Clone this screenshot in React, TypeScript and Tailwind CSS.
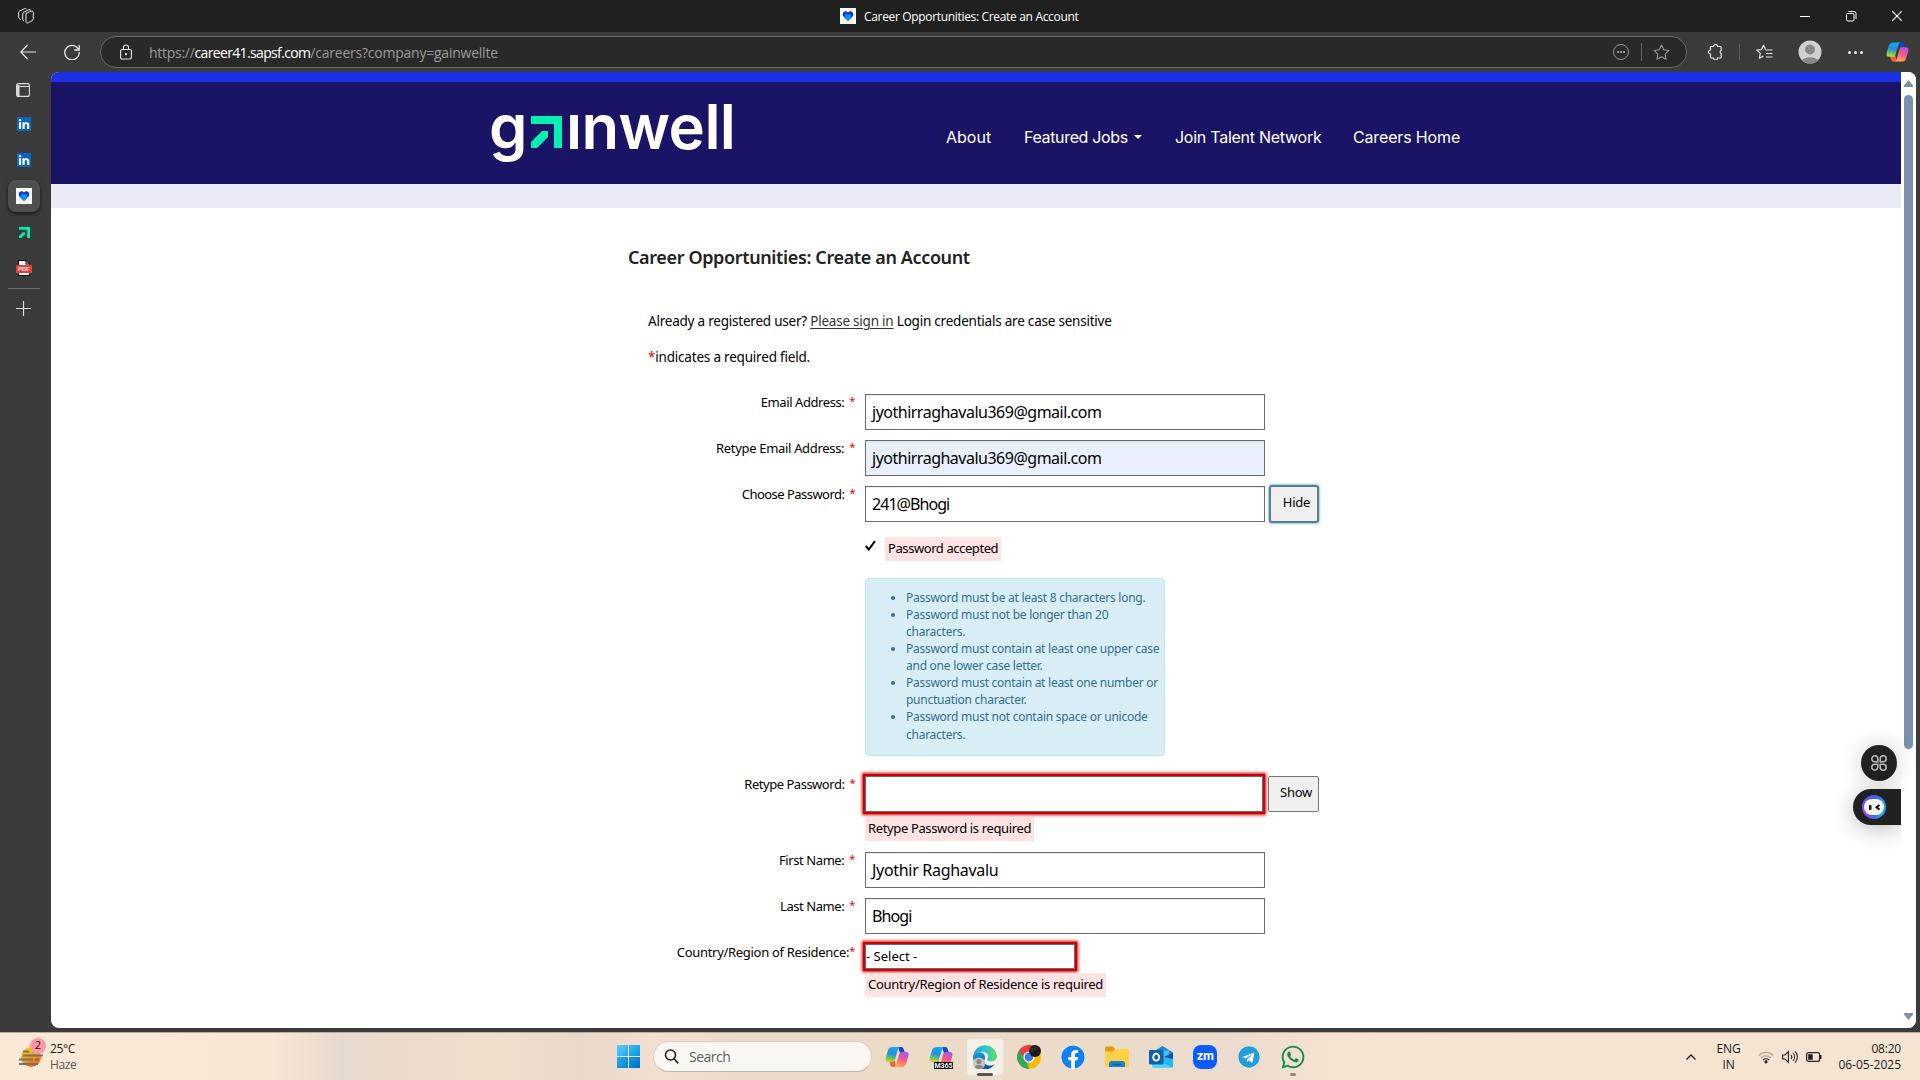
import React from "react";
import { FaFacebook, FaLinkedin, FaTelegram, FaWhatsapp } from "react-icons/fa";

const UI = "font-['Open_Sans','Noto_Sans',sans-serif]";

function Copilot({ id, className }: { id: string; className: string }) {
  return (
    <svg viewBox="0 0 24 24" className={className}>
      <defs>
        <linearGradient id={`${id}a`} x1="0.3" y1="0" x2="0.1" y2="1">
          <stop offset="0" stopColor="#1aa7ee" />
          <stop offset="0.4" stopColor="#1f8fe0" />
          <stop offset="0.7" stopColor="#5fc46a" />
          <stop offset="1" stopColor="#f2cf1d" />
        </linearGradient>
        <linearGradient id={`${id}b`} x1="0.8" y1="0" x2="0.4" y2="1">
          <stop offset="0" stopColor="#a457f0" />
          <stop offset="0.5" stopColor="#f0578e" />
          <stop offset="1" stopColor="#ffa94d" />
        </linearGradient>
      </defs>
      <path d="M13 2h3.4c1.3 0 1.9.9 2.3 2.2L20 8h-5z" fill="#1747c9" />
      <path d="M11 22H7.6c-1.3 0-1.9-.9-2.3-2.2L4 16h6z" fill="#f0603c" />
      <path d="M8 2h7c-1.3.5-1.8 1.6-2.2 3L10 14.500c-.5 1.600-1.300 2.500-3 2.500H3C.8 17 0 15.400.7 12.800L3 5.300C3.800 3 5.300 2 8 2z" fill={`url(#${id}a)`} />
      <path d="M16 22H9c1.300-.5 1.800-1.600 2.200-3L14 9.500C14.500 7.900 15.300 7 17 7h4c2.200 0 3 1.600 2.300 4.200L21 18.700c-.8 2.300-2.300 3.300-5 3.300z" fill={`url(#${id}b)`} />
    </svg>
  );
}

function Heart() {
  return (
    <span className="flex h-4 w-4 items-center justify-center bg-white">
      <svg viewBox="0 0 12 12" className="h-3 w-3">
        <path d="M6 11L1.500 6.500C0 4.500.8 1.500 3.300 1.200 4.600 1.100 5.500 1.700 6 2.500c.5-.8 1.400-1.400 2.700-1.300 2.500.3 3.300 3.300 1.800 5.300z" fill="#1238d8" />
        <path d="M6 10.500L3.200 7.200c-.8-1.700.2-3.200 1.500-3.100.6 0 1 .4 1.300.9.300-.5.700-.9 1.300-.9 1.300-.1 2.300 1.400 1.500 3.100z" fill="#0a96ff" />
      </svg>
    </span>
  );
}

function Arrow({ className }: { className: string }) {
  return (
    <svg viewBox="0 0 31 32" className={className} preserveAspectRatio="none" fill="#00f0b0">
      <path d="M0 0H31V32H23V8H0Z" />
      <path d="M11 15h6v6L6 32H0v-6z" />
    </svg>
  );
}

function TitleBar() {
  return (
    <div className="flex h-8 items-center bg-[#202020] text-white">
      <svg viewBox="0 0 16 16" className="ml-[18px] h-4 w-4" fill="none" stroke="#e8e8e8" strokeWidth="1">
        <path d="M8 5.500l5-2.300c1.300-.4 2.300.2 2.300 1.300v6.300c0 .8-.4 1.400-1.200 1.800l-4 2.300c-1.100.6-2.100 0-2.100-1.200z" />
        <path d="M6 13l-.8-.4c-.4-.3-.5-.7-.5-1.300V6c0-1 .4-1.500 1.200-1.900L11 1.700c.8-.3 1.400-.1 1.800.5" />
        <path d="M2.600 11.500l-1.100-.6C1 10.600.7 10.200.7 9.500V4.600c0-.8.4-1.400 1.100-1.700L6.600.7c.7-.3 1.400-.2 1.900.3" />
      </svg>
      <div className={`ml-[806px] flex items-center gap-[7px] text-[12px] ${UI}`}>
        <Heart />
        <span className="w-[300px] pt-px pl-px whitespace-nowrap tracking-[-0.330px]">Career Opportunities: Create an Account</span>
      </div>
      <div className="ml-auto flex items-center gap-9 pr-[18px]">
        <span className="h-px w-[10px] bg-white" />
        <svg viewBox="0 0 10 10" className="h-[10px] w-[10px] overflow-visible" fill="none" stroke="#fff">
          <rect x=".5" y="2.500" width="7.500" height="7.500" rx="1.200" />
          <path d="M2.500.5H8a2 2 0 0 1 2 2V8" />
        </svg>
        <svg viewBox="0 0 10 10" className="h-[10px] w-[10px]" stroke="#fff" strokeWidth="1.200">
          <path d="M0 0l10 10M10 0L0 10" />
        </svg>
      </div>
    </div>
  );
}

const STAR = "M8 1l2.100 4.500 4.900.6-3.600 3.400.9 4.900L8 12l-4.300 2.400.9-4.900L1 6.100l4.900-.6z";

function Toolbar() {
  return (
    <div className="flex h-10 items-center text-[#e6e6e6]">
      <svg viewBox="0 0 16 16" className="ml-5 h-4 w-4" fill="none" stroke="currentColor" strokeWidth="1.200">
        <path d="M16 8H.8M7.500 1L.8 8l6.700 7" />
      </svg>
      <svg viewBox="0 0 16 16" className="ml-7 h-4 w-4" fill="none" stroke="currentColor" strokeWidth="1.300">
        <path d="M14.800 6.200A7.200 7.200 0 1 0 15.200 8M15.200 1v5h-5" />
      </svg>
      <div className="ml-5 flex h-8 w-[1587px] items-center rounded-full border border-[#666] bg-[#292929]">
        <svg viewBox="0 0 12 16" className="ml-[19px] h-4 w-3" fill="none" stroke="currentColor" strokeWidth="1.100">
          <rect x=".6" y="5.500" width="10.800" height="9.500" rx="1.500" />
          <path d="M3.500 5.500V3.500a2.500 2.500 0 0 1 5 0v2" />
          <circle cx="6" cy="10.200" r=".6" fill="currentColor" />
        </svg>
        <div className={`ml-[17px] w-[360px] pt-px text-[14px] leading-[18px] whitespace-nowrap text-[#9a9a9a] ${UI}`}>
          <span className="tracking-[-0.280px]">https://</span>
          <span className="tracking-[-0.650px] text-white">career41.sapsf.com</span>
          <span className="tracking-[-0.230px]">/careers?company=gainwellte</span>
        </div>
        <svg viewBox="0 0 16 16" className="ml-auto h-4 w-4 text-[#999]" fill="none" stroke="currentColor">
          <circle cx="8" cy="8" r="7.500" />
          <path d="M4 8h2M7 8h2M10 8h2" strokeWidth="1.800" />
        </svg>
        <span className="ml-3 h-[18px] w-px bg-[#666]" />
        <svg viewBox="0 0 16 16" className="mr-[16px] ml-[11px] h-[17px] w-[17px]" fill="none" stroke="#999">
          <path d={STAR} strokeLinejoin="round" />
        </svg>
      </div>
      <svg viewBox="0 0 16 16" className="ml-5 h-4 w-4" fill="none" stroke="currentColor" strokeWidth="1.200">
        <path d="M3.500 2.500h3a2 2 0 0 1 4 0h2.700a1 1 0 0 1 1 1V6.500a1.700 1.700 0 0 0 0 3.200v3.300a1 1 0 0 1-1 1h-2.700a2 2 0 0 1-4 0H4.500a1 1 0 0 1-1-1v-3a2 2 0 0 1 0-4z" />
      </svg>
      <span className="ml-4 h-4 w-px bg-[#5e5e5e]" />
      <svg viewBox="0 0 17 16" className="ml-4 h-4 w-[17px]" fill="none" stroke="currentColor" strokeWidth="1.200">
        <path d="M9.500 5.500L7.500 1.200 5.500 5.500l-4.700.6 3.500 3.300-.9 4.800 4.100-2.300" strokeLinejoin="round" />
        <path d="M9.500 6h7M10 9.500h6.500M10 13h6.500" />
      </svg>
      <svg viewBox="0 0 24 24" className="ml-[25px] h-6 w-6">
        <circle cx="12" cy="12" r="11.500" fill="#d2d0ce" />
        <circle cx="12" cy="9.500" r="5" fill="#8a8886" />
        <path d="M3.800 20a10 6.500 0 0 1 16.400 0 11.500 11.500 0 0 1-16.400 0z" fill="#8a8886" />
      </svg>
      <div className="ml-[26px] flex gap-[3px]">
        <span className="h-[3px] w-[3px] rounded-full bg-[#eee]" />
        <span className="h-[3px] w-[3px] rounded-full bg-[#eee]" />
        <span className="h-[3px] w-[3px] rounded-full bg-[#eee]" />
      </div>
      <Copilot id="tb" className="ml-[23px] h-6 w-[23px]" />
    </div>
  );
}

function Sidebar() {
  return (
    <div className="flex w-[51px] flex-col">
      <div className="ml-2 flex w-8 flex-col items-center">
        <svg viewBox="0 0 14 14" className="mt-[11px] mr-[2px] h-[14px] w-[14px]" fill="none" stroke="#ddd" strokeWidth="1.100">
          <rect x=".6" y=".6" width="12.800" height="12.800" rx="2" />
          <path d="M3.500 3.500H13" />
          <path d="M2.300 2v11" strokeWidth="2.500" />
        </svg>
        <span className="mt-5 h-[14px] w-[14px] bg-white text-[#0a66c2]"><FaLinkedin className="-mt-px h-4 w-[14px] scale-x-[1.050]" /></span>
        <span className="mt-[22px] h-[14px] w-[14px] bg-white text-[#0a66c2]"><FaLinkedin className="-mt-px h-4 w-[14px] scale-x-[1.050]" /></span>
        <span className="mt-[13px] flex h-8 w-8 items-center justify-center rounded-lg bg-[#4f4f4f] shadow-[0_2px_4px_rgba(0,0,0,0.6)]">
          <Heart />
        </span>
        <Arrow className="mt-[15px] h-[11px] w-[11px]" />
        <svg viewBox="0 0 16 16" className="mt-[22px] mr-px h-4 w-4">
          <path d="M2.500.5H10L13.500 4V15.500H2.500Z" fill="#fff" stroke="#000" />
          <path d="M10 .5V4h3.500" fill="none" stroke="#000" />
          <rect x="0" y="5" width="16" height="8" fill="#f33" />
          <text x="8" y="11.400" textAnchor="middle" fontSize="6" fontWeight="bold" fill="#fff" fontFamily="Liberation Sans">PDF</text>
        </svg>
        <span className="mt-3 h-px w-8 bg-[#6a6a6a]" />
        <svg viewBox="0 0 14 14" className="mt-[12px] mr-px h-[15px] w-[15px]" stroke="#ddd" strokeWidth="1.100">
          <path d="M7 0v14M0 7h14" />
        </svg>
      </div>
    </div>
  );
}

function SiteHeader() {
  return (
    <>
      <div className="h-[10px] bg-[#1a31e5]" />
      <div className="flex h-[102px] bg-[#1a1466] text-white">
        <div className="ml-[438px] flex h-[90px] w-[252px] font-['Inter',sans-serif] text-[61.500px] leading-[89px] font-semibold">
          <span className="w-[42px]">g</span>
          <Arrow className="mt-[34px] h-8 w-[31px]" />
          <span className="ml-[4px] tracking-[-0.600px]">ınwell</span>
        </div>
        <nav className="mt-[43px] ml-[205px] flex h-6 items-center gap-8 font-['Inter',sans-serif] text-[16px] whitespace-nowrap">
          <span className="w-[46px]">About</span>
          <span className="flex w-[119px] items-center gap-[6px] tracking-[-0.350px]">
            Featured Jobs
            <span className="border-x-4 border-t-4 border-x-transparent border-t-white" />
          </span>
          <span className="w-[146px] tracking-[-0.260px]">Join Talent Network</span>
          <span className="tracking-[-0.150px]">Careers Home</span>
        </nav>
      </div>
      <div className="h-6 bg-[#e9ecf5]" />
    </>
  );
}

function Row({ label, gap = true, tracking = "tracking-[-0.420px]", className, children }: { label: string; gap?: boolean; tracking?: string; className: string; children: React.ReactNode }) {
  return (
    <div className={`flex items-start gap-[10px] ${className}`}>
      <div className={`flex w-[227px] justify-end text-[13px] leading-4 whitespace-nowrap ${tracking}`}>
        {label}
        <span className={gap ? "ml-[5px] text-[11px] leading-[14px] text-[#e00]" : "text-[11px] leading-[14px] text-[#e00]"}>*</span>
      </div>
      {children}
    </div>
  );
}

const FIELD = "flex h-9 w-[400px] items-center border border-[#6b6b6b] pb-px pl-[6px] text-[16px] shadow-[inset_0_1px_1px_rgba(0,0,0,0.075)]";
const NOTE = "flex items-center bg-[#ffe2e2] text-[13px] whitespace-nowrap";

function Form() {
  return (
    <div className="ml-[577px] flex flex-col font-['Noto_Sans','Open_Sans',sans-serif] text-black">
      <h1 className="mt-[37px] text-[18px] leading-6 font-semibold tracking-[-0.370px] text-[#222]">Career Opportunities: Create an Account</h1>
      <p className="mt-[42px] ml-5 text-[13.500px] leading-5 tracking-[-0.220px] whitespace-nowrap">
        Already a registered user? <span className="text-[#333] underline underline-offset-2">Please sign in</span> Login credentials are case sensitive
      </p>
      <p className="mt-4 ml-5 text-[13.500px] leading-5 tracking-[-0.200px]"><span className="text-[#e00]">*</span>indicates a required field.</p>
      <Row label="Email Address:" className="mt-[27px] h-[46px]"><div className={`${FIELD} tracking-[-0.500px]`}>jyothirraghavalu369@gmail.com</div></Row>
      <Row label="Retype Email Address:" tracking="tracking-[-0.320px]" className="h-[46px]"><div className={`${FIELD} bg-[#e8f0fe] tracking-[-0.500px]`}>jyothirraghavalu369@gmail.com</div></Row>
      <Row label="Choose Password:" tracking="tracking-[-0.530px]" className="h-[51px]">
        <div className={`${FIELD} tracking-[-0.950px]`}>241@Bhogi</div>
        <div className="-ml-[5px] flex h-9 w-12 items-center justify-center rounded-[2px] border border-[#767676] bg-[#efefef] pb-[2px] pl-[5px] text-[13px] tracking-[-0.200px] shadow-[0_0_0_1px_#3f87a6,0_0_3px_1px_#3f87a6]">Hide</div>
      </Row>
      <div className="ml-[237px] flex h-[41px] items-start">
        <svg viewBox="0 0 11 11" className="mt-[3px] h-[11px] w-[11px]" fill="none" stroke="#000" strokeWidth="2"><path d="M.8 6l3 3.500L10 1" /></svg>
        <div className={`${NOTE} ml-[9px] h-6 w-[116px] pl-[3px] tracking-[-0.420px]`}>Password accepted</div>
      </div>
      <ul className="ml-[237px] h-[178px] w-[300px] list-disc rounded-[4px] border border-[#bce8f1] bg-[#d9edf7] pt-[10px] pl-10 text-[12px] leading-[17px] tracking-[-0.260px] whitespace-nowrap text-[#31708f]">
        <li>Password must be at least 8 characters long.</li>
        <li>Password must not be longer than 20<br />characters.</li>
        <li>Password must contain at least one upper case<br />and one lower case letter.</li>
        <li>Password must contain at least one number or<br />punctuation character.</li>
        <li>Password must not contain space or unicode<br /><span className="leading-[19px]">characters.</span></li>
      </ul>
      <Row label="Retype Password:" tracking="tracking-[-0.480px]" className="mt-5 h-[41px]">
        <div className="h-9 w-[398px] border border-[#6b6b6b] shadow-[0_0_0_2px_#d00000,0_0_3px_3px_#d00000]" />
        <div className="-ml-[5px] flex h-9 w-[51px] items-center justify-center rounded-[2px] border border-[#767676] bg-[#efefef] pb-[2px] pl-[5px] text-[13px] tracking-[-0.300px]">Show</div>
      </Row>
      <div className={`${NOTE} ml-[237px] h-6 w-[169px] pl-[3px] tracking-[-0.360px]`}>Retype Password is required</div>
      <Row label="First Name:" className="mt-[11px] h-[46px]"><div className={`${FIELD} tracking-[-0.300px]`}>Jyothir Raghavalu</div></Row>
      <Row label="Last Name:" className="h-[46px]"><div className={`${FIELD} tracking-[-0.900px]`}>Bhogi</div></Row>
      <Row label="Country/Region of Residence:" gap={false} tracking="tracking-[-0.300px]" className="h-[29px]">
        <div className="flex h-[25px] w-[210px] items-center border border-[#6b6b6b] text-[13px] shadow-[0_0_0_2px_#d00000,0_0_3px_3px_#d00000]">- Select -</div>
      </Row>
      <div className={`${NOTE} ml-[237px] h-6 w-[241px] pl-[3px] tracking-[-0.280px]`}>Country/Region of Residence is required</div>
    </div>
  );
}

function FloatingTools() {
  return (
    <div className="absolute top-[673px] right-[15px] flex h-[90px] w-[90px] flex-col items-end gap-2">
      <span className="mr-1 flex h-9 w-9 items-center justify-center rounded-full bg-[#212121] shadow-[0_0_22px_rgba(0,0,0,0.200)]">
        <svg viewBox="0 0 16 16" className="h-4 w-4" fill="none" stroke="#bbb" strokeWidth="1.500">
          <path d="M6.800 6.800H3.800a3 3 0 1 1 3-3zM9.200 6.800v-3a3 3 0 1 1 3 3zM6.800 9.200v3a3 3 0 1 1-3-3zM9.200 9.200h3a3 3 0 1 1-3 3z" />
        </svg>
      </span>
      <span className="flex h-9 w-12 items-center rounded-l-full bg-[#212121] pl-[9px] shadow-[0_4px_22px_rgba(0,0,0,0.250)] [clip-path:inset(-50px_0_-50px_-50px)]">
        <span className="flex h-6 w-6 items-center justify-center rounded-full bg-[conic-gradient(#4b5cff,#2b8cf0,#18b4e8,#3a6cf0,#b03cf0,#6a4cff,#4b5cff)]">
          <svg viewBox="0 0 20 16" className="h-4 w-5">
            <rect width="20" height="16" rx="8" fill="#fff" />
            <rect x="5" y="6" width="2.500" height="5" rx="1" fill="#111" />
            <path d="M15.500 6l-3 2.300 3 2.300" stroke="#111" strokeWidth="2" fill="none" />
          </svg>
        </span>
      </span>
    </div>
  );
}

function Scrollbar() {
  return (
    <div className="flex w-[15px] flex-col items-center bg-white">
      <span className="mt-2 h-[7px] w-[10px] bg-[#7b91ab] [clip-path:polygon(50%_0,100%_85%,90%_100%,10%_100%,0_85%)]" />
      <span className="mt-2 h-[654px] w-[9px] rounded-full bg-[#7b91ab]" />
      <span className="mt-auto mb-2 h-[7px] w-[10px] bg-[#7b91ab] [clip-path:polygon(50%_100%,100%_15%,90%_0,10%_0,0_15%)]" />
    </div>
  );
}

function Taskbar() {
  return (
    <div className={`flex h-12 items-center border-t border-[#b9aea3] bg-[linear-gradient(90deg,#fbe9d7_0,#f9e7d5_270px,#e6d9cf_345px,#ecdccb_420px,#efdfcd_500px,#e8d8cb_580px,#f2e0cf_660px,#e8dac6_760px,#ecdcc6_900px,#ebdbc9_1100px,#ecdccf_1230px,#f5e2d1_1330px,#f6e3d1_100%)] text-[#1b1b1b] ${UI}`}>
      <div className="relative ml-[19px] h-6 w-6">
        <svg viewBox="0 0 24 24" className="-mt-px h-6 w-6">
          <defs><linearGradient id="sun" x1="0.2" y1="0" x2="0.7" y2="1"><stop offset="0" stopColor="#ffd500" /><stop offset="1" stopColor="#f2600c" /></linearGradient></defs>
          <circle cx="12" cy="13" r="10" fill="url(#sun)" />
          <path d="M4 7.500h6M4 11.500h20M0 15.500h14M16 15.500h4M0 20h19" stroke="#70727a" strokeWidth="1.800" />
        </svg>
        <span className="absolute -top-[7px] left-[11px] flex h-4 w-4 items-center justify-center rounded-full bg-[#ff99a4] text-[11px]">2</span>
      </div>
      <div className="ml-[7px] flex w-[61px] flex-col text-[12px] leading-4 tracking-[-0.350px]">
        <span>25°C</span>
        <span className="text-[#5c5650]">Haze</span>
      </div>
      <div className="ml-[506px] grid grid-cols-2 gap-px">
        <span className="h-[11px] w-[11px] bg-[linear-gradient(135deg,#56d1fb,#21a6ee)]" />
        <span className="h-[11px] w-[11px] bg-[linear-gradient(135deg,#38bcf5,#1191e2)]" />
        <span className="h-[11px] w-[11px] bg-[linear-gradient(135deg,#2cabf0,#0a83d8)]" />
        <span className="h-[11px] w-[11px] bg-[linear-gradient(135deg,#1596e6,#0070cc)]" />
      </div>
      <div className="ml-[13px] flex h-[31px] w-[219px] items-center rounded-full border border-[#ddd0c3] border-b-[#c3b7ab] bg-[#faf6f1] text-[14px] tracking-[-0.500px] text-[#5f5b57]">
        <svg viewBox="0 0 15 15" className="mr-[10px] ml-[10px] h-[15px] w-[15px]" fill="none" stroke="#222" strokeWidth="1.600"><circle cx="6.500" cy="6" r="5" /><path d="M10 9.800l4.300 4.600" /></svg>
        Search
      </div>
      <Copilot id="t1" className="ml-[13px] h-6 w-6" />
      <div className="relative ml-5 h-6 w-6">
        <Copilot id="t2" className="h-6 w-6" />
        <svg viewBox="0 0 19 7" className="absolute top-[17px] left-[5px] h-[7px] w-[19px]">
          <rect width="19" height="7" fill="#000" />
          <text x="9.500" y="6.100" textAnchor="middle" fontSize="7" fontWeight="bold" fill="#fff" fontFamily="Roboto">M365</text>
        </svg>
      </div>
      <div className="relative ml-[13px] flex h-[38px] w-[38px] items-center justify-center rounded-[4px] border border-[#e6ddd3] bg-[#f6efe8]">
        <svg viewBox="0 0 24 24" className="h-6 w-6">
          <defs>
            <linearGradient id="ea" x1="0" y1="0.4" x2="1" y2="0.4"><stop offset="0" stopColor="#1f9fe8" /><stop offset="0.500" stopColor="#2cc3d2" /><stop offset="1" stopColor="#62e05a" /></linearGradient>
            <linearGradient id="eb" x1="0" y1="0" x2="0.800" y2="1"><stop offset="0" stopColor="#1b9de2" /><stop offset="1" stopColor="#0c4fa0" /></linearGradient>
          </defs>
          <path d="M0 12C0 8.500 4 6.500 8 7.500c3 .8 4.500 3 4 6-2 3 0 7 5 7 2 0 3.500-.4 5-1.500A12 12 0 0 1 0 12z" fill="url(#eb)" />
          <path d="M.2 10.500A12 12 0 0 1 24 11c.2 3.500-2 5.500-5.500 5.500-2.500 0-4.500-.8-4.500-2 0-.7 1-1 1-3C15 9 12.500 6.800 9 6.800c-4 0-7.500 1.500-8.800 3.700z" fill="url(#ea)" />
          <circle cx="6" cy="18.500" r="6" fill="#c9c7c5" />
          <circle cx="6" cy="16.500" r="2.600" fill="#8b8987" />
          <path d="M1.500 22a5 4 0 0 1 9 0 6 6 0 0 1-9 0z" fill="#8b8987" />
        </svg>
        <span className="absolute bottom-[-1px] left-[10px] h-[3px] w-4 rounded-full bg-[#555]" />
      </div>
      <svg viewBox="0 0 24 24" className="ml-[13px] h-6 w-6">
        <path d="M12 12L1.600 6A12 12 0 0 1 22.400 6z" fill="#ea4335" />
        <path d="M12 12L22.400 6A12 12 0 0 1 12 24z" fill="#fbbc05" />
        <path d="M12 12v12A12 12 0 0 1 1.600 6z" fill="#34a853" />
        <path d="M12 12h-5L1.600 6 12 6z" fill="#ea4335" />
        <path d="M17 15l-5 9-3-7z" fill="#fbbc05" opacity=".6" />
        <circle cx="12" cy="12" r="5.600" fill="#fff" />
        <circle cx="12" cy="12" r="4.400" fill="#3b7ded" />
        <circle cx="18" cy="6" r="6" fill="#1a1a1a" />
        <path d="M15 3v4M18 2v3" stroke="#555" />
      </svg>
      <span className="ml-5 rounded-full bg-white text-[#1180f5]"><FaFacebook className="h-6 w-6" /></span>
      <svg viewBox="0 0 24 24" className="ml-5 h-6 w-6">
        <path d="M0 3a1.500 1.500 0 0 1 1.500-1.500H8L10.500 4 8 7H0z" fill="#dd9f0f" />
        <path d="M0 6.500h8L10.500 4H22.500A1.500 1.500 0 0 1 24 5.500V22H0z" fill="#ffcf48" />
        <path d="M4 22v-3.500A2.500 2.500 0 0 1 6.500 16h11a2.500 2.500 0 0 1 2.500 2.500V22z" fill="#1683d0" />
        <path d="M7.500 19.500h9" stroke="#0b5fa4" strokeWidth="1.500" />
      </svg>
      <svg viewBox="0 0 24 24" className="ml-5 h-6 w-6">
        <path d="M3 7.500L13.500 1 24 7.500V12H3z" fill="#1a86d8" />
        <path d="M6 5.500h14V14H6z" fill="#3fc3f5" />
        <path d="M14 13l10-5.500V21a2 2 0 0 1-2 2H5z" fill="#29b4f0" />
        <path d="M24 7.500V14l-9-2z" fill="#0c55a5" />
        <path d="M3 12l21 11H5a2 2 0 0 1-2-2z" fill="#4cd8f8" />
        <rect y="5" width="14.500" height="14.500" rx="1" fill="#0f5fb5" />
        <ellipse cx="7.200" cy="12.200" rx="3" ry="3.400" fill="none" stroke="#fff" strokeWidth="1.900" />
      </svg>
      <span className="ml-5 flex h-6 w-6 items-center justify-center rounded-[8px] bg-[#0b5cff] pb-[2px] font-['Inter',sans-serif] text-[12px] font-bold tracking-[-0.500px] text-white">zm</span>
      <span className="ml-[21px] rounded-full bg-white text-[#229ed9]"><FaTelegram className="h-[22px] w-[22px]" /></span>
      <div className="relative ml-[21px] h-6 w-6">
        <FaWhatsapp className="-mt-px -ml-px h-[26px] w-[26px] text-[#178a4c]" />
        <span className="absolute top-7 left-[9px] h-[3px] w-[6px] rounded-full bg-[#8f867e]" />
      </div>
      <svg viewBox="0 0 10 6" className="ml-auto h-[6px] w-[10px]" fill="none" stroke="#222" strokeWidth="1.300"><path d="M.5 5.500L5 1l4.500 4.500" /></svg>
      <div className="ml-5 flex w-[25px] flex-col items-center text-[12px] leading-4 tracking-[-0.200px]"><span>ENG</span><span>IN</span></div>
      <svg viewBox="0 0 16 14" className="ml-[17px] h-[14px] w-4" fill="none" stroke="#222" strokeWidth="1.200">
        <path d="M.8 5.500a10 10 0 0 1 14.400 0M3 8a7 7 0 0 1 10 0" opacity=".3" />
        <path d="M5 10a4.300 4.300 0 0 1 6 0" /><circle cx="8" cy="11.800" r="1" fill="#222" />
      </svg>
      <svg viewBox="0 0 16 14" className="ml-2 h-[14px] w-4" fill="none" stroke="#222" strokeWidth="1.100">
        <path d="M.6 5h2.400l3.400-3.500v11L3 9H.6zM9 5a3 3 0 0 1 0 4M11 3a6 6 0 0 1 0 8M13 1.300a8 8 0 0 1 0 11.400" />
      </svg>
      <svg viewBox="0 0 16 10" className="ml-2 h-[10px] w-4">
        <rect x=".6" y=".6" width="13" height="8.800" rx="2" fill="none" stroke="#222" strokeWidth="1.200" />
        <rect x="2.200" y="2.200" width="4.500" height="5.600" fill="#222" /><path d="M14.500 3v4" stroke="#222" strokeWidth="2" />
      </svg>
      <div className="mr-[19px] ml-3 flex w-[67px] flex-col items-end text-[12px] leading-4 whitespace-nowrap"><span className="tracking-[-0.200px]">08:20</span><span>06-05-2025</span></div>
    </div>
  );
}

export default function App() {
  return (
    <div className="flex h-[1080px] w-[1920px] flex-col overflow-hidden bg-[#3b3b3b]">
      <TitleBar />
      <Toolbar />
      <div className="flex h-[956px]">
        <Sidebar />
        <div className="relative flex w-[1865px] overflow-hidden rounded-lg bg-white">
          <main className="w-[1850px]">
            <SiteHeader />
            <Form />
          </main>
          <Scrollbar />
          <FloatingTools />
        </div>
      </div>
      <div className="h-1" />
      <Taskbar />
    </div>
  );
}
